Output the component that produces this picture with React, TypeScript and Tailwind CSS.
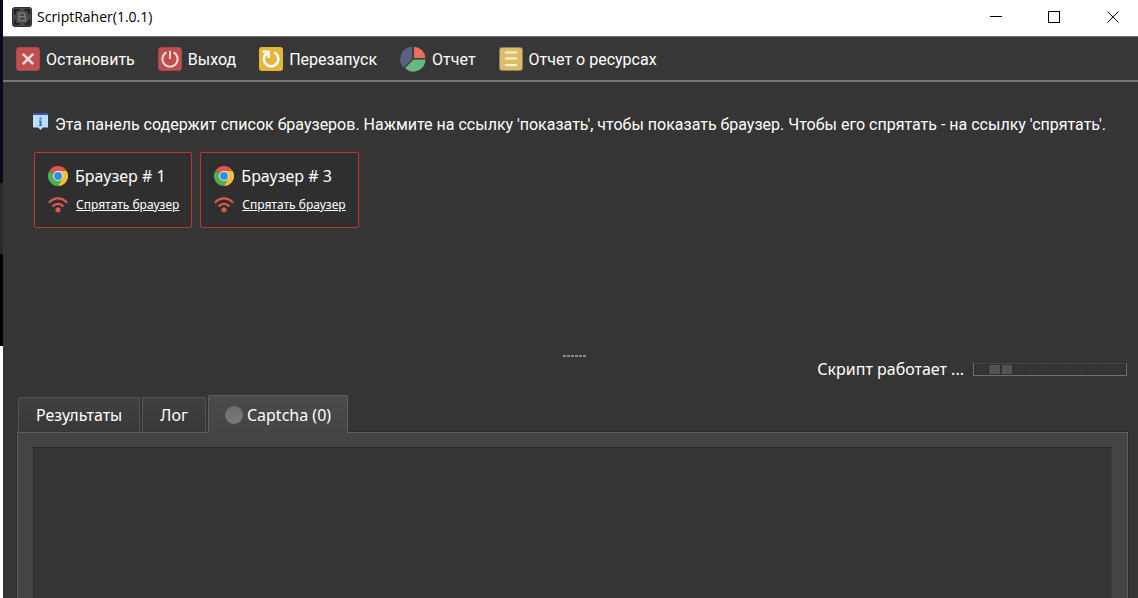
import { useState } from "react";
import type { ReactNode } from "react";
import { clsx } from "clsx";

const BROWSERS = [1, 3];

const PROGRESS_CELLS = ["idle", "on", "on", "idle", "idle", "idle", "idle", "idle", "idle", "idle", "idle", "idle"];

function AppLogo() {
  return (
    <svg width="20" height="20" viewBox="0 0 20 20" fill="none">
      <rect x="0.5" y="0.5" width="19" height="19" rx="2" fill="#484848" stroke="#303030" />
      <path
        d="M3 7.5V3h4.5M12.5 3H17v4.5M17 12.5V17h-4.5M7.5 17H3v-4.5"
        stroke="#161616"
        strokeWidth="1.5"
      />
      <path d="M7 6h4.2a1.9 1.9 0 0 1 0 3.8H7zM7 9.8h4.8a2 2 0 0 1 0 4H7z" stroke="#8c8c8c" strokeWidth="1.1" />
    </svg>
  );
}

function StopIcon() {
  return (
    <svg width="24" height="24" viewBox="0 0 24 24">
      <rect x="0.5" y="0.5" width="23" height="23" rx="2.5" fill="#bf4f51" stroke="#a84648" />
      <path d="M6.8 6.8l10.4 10.4M17.2 6.8L6.8 17.2" stroke="#f1dcdc" strokeWidth="2.6" />
    </svg>
  );
}

function PowerIcon() {
  return (
    <svg width="24" height="24" viewBox="0 0 24 24" fill="none">
      <rect x="0.5" y="0.5" width="23" height="23" rx="2.5" fill="#bf4f51" stroke="#a84648" />
      <path d="M8.5 5.3a7.6 7.6 0 1 0 7 0" stroke="#f1dcdc" strokeWidth="1.9" />
      <path d="M12 4v8" stroke="#f1dcdc" strokeWidth="1.9" />
    </svg>
  );
}

function RestartIcon() {
  return (
    <svg width="24" height="24" viewBox="0 0 24 24" fill="none">
      <rect width="24" height="24" rx="3" fill="#e5b53c" />
      <path d="M15.2 5.4A7.3 7.3 0 1 1 6.8 7" stroke="#fff" strokeWidth="2.6" />
      <path d="M3.5 4.6H9.7V11" stroke="#fff" strokeWidth="2.4" />
      <path d="M9.5 5L6.2 8.6" stroke="#fff" strokeWidth="2.2" />
    </svg>
  );
}

function PieIcon() {
  return (
    <svg width="26" height="26" viewBox="0 0 26 26">
      <path d="M12.3 13L3.6 21.5A12.3 12.3 0 0 1 12.3 0.8z" fill="#5b6180" />
      <path d="M14 0.8A12 12 0 0 1 25.5 12H14z" fill="#ec6e5b" />
      <path d="M13.5 13.4H25.5A12 12 0 0 1 5 22z" fill="#64b97e" />
    </svg>
  );
}

function ListIcon() {
  return (
    <svg width="24" height="24" viewBox="0 0 24 24">
      <rect x="0.5" y="0.5" width="23" height="23" rx="2.5" fill="#dfbc66" stroke="#8a7f68" />
      <path d="M6 5.5h12M6 11.5h12M6 18h12" stroke="#fbf3df" strokeWidth="2.2" />
    </svg>
  );
}

function InfoIcon() {
  return (
    <svg width="15" height="17" viewBox="0 0 15 17" className="shrink-0">
      <path d="M0 2h15v12.5H9.8L7.5 17 5.2 14.5H0z" fill="#bbdefb" />
      <path d="M0 0h15v2H0z" fill="#3f51b5" />
      <path d="M6.5 4.5h2v2h-2zM6 7.5h2.5V12H9v1H6v-1h.5V8.5H6z" fill="#1976d2" />
    </svg>
  );
}

function ChromeIcon() {
  return (
    <svg width="20" height="20" viewBox="0 0 48 48">
      <path d="M24 24L3.2 12A24 24 0 0 1 44.8 12H24z" fill="#e0564b" />
      <path d="M24 24L3.2 12A24 24 0 0 0 24 48L34.4 30z" fill="#4caf50" />
      <path d="M24 48A24 24 0 0 0 44.8 12H24L34.4 30z" fill="#f5c02f" />
      <circle cx="24" cy="24" r="12" fill="#f2f2f2" />
      <circle cx="24" cy="24" r="9.6" fill="#2f8fe8" />
    </svg>
  );
}

function WifiIcon() {
  return (
    <svg width="20" height="16" viewBox="0 0 20 16" fill="none" stroke="#dd5a4f" strokeWidth="2.3">
      <path d="M0.9 5.8C6 0 14 0 19.1 5.8" />
      <path d="M4.6 9.4C7.6 5.9 12.4 5.9 15.4 9.4" />
      <circle cx="10" cy="12.8" r="2.6" fill="#dd5a4f" stroke="none" />
    </svg>
  );
}

function TitleBar() {
  return (
    <header className="flex h-9 items-center bg-white pb-0.5 pl-[9px] font-['Open_Sans',sans-serif] text-black">
      <AppLogo />
      <h1 className="ml-[5px] flex-1 text-sm">ScriptRaher(1.0.1)</h1>
      <div className="flex">
        <button type="button" aria-label="Свернуть" className="flex h-8 w-[58px] items-center justify-center">
          <svg width="12" height="12" stroke="#000" shapeRendering="crispEdges">
            <path d="M0 5.5h12" />
          </svg>
        </button>
        <button type="button" aria-label="Развернуть" className="flex h-8 w-[58px] items-center justify-center">
          <svg width="12" height="12" fill="none" stroke="#000" shapeRendering="crispEdges">
            <rect x="0.5" y="0.5" width="11" height="11" />
          </svg>
        </button>
        <button type="button" aria-label="Закрыть" className="flex h-8 w-[55px] items-center justify-center pl-1">
          <svg width="12" height="12" stroke="#000">
            <path d="M0.5 0.5l11 11M11.5 0.5l-11 11" />
          </svg>
        </button>
      </div>
    </header>
  );
}

interface ToolButtonProps {
  icon: ReactNode;
  label: string;
}

function ToolButton({ icon, label }: ToolButtonProps) {
  return (
    <button type="button" className="flex items-center gap-1.5 whitespace-nowrap">
      {icon}
      <span className="pt-0.5">{label}</span>
    </button>
  );
}

function BrowserCard({ id }: { id: number }) {
  return (
    <li className="flex flex-col gap-1 rounded-xs border border-[#b83a36] bg-[#2f2f2f] px-3 py-[11px] shadow-[0_0_2px_#6b2a28]">
      <div className="flex h-6 items-center gap-[7px] pl-px">
        <ChromeIcon />
        <span>Браузер # {id}</span>
      </div>
      <div className="flex h-6 items-center gap-2 pt-0.5 pl-px">
        <WifiIcon />
        <a href="#" className="whitespace-nowrap text-xs underline">
          Спрятать браузер
        </a>
      </div>
    </li>
  );
}

interface TabProps {
  active: boolean;
  onClick: () => void;
  children: ReactNode;
}

function Tab({ active, onClick, children }: TabProps) {
  return (
    <button
      type="button"
      role="tab"
      aria-selected={active}
      onClick={onClick}
      className={clsx(
        "flex items-center justify-center rounded-t-xs border border-b-0",
        active
          ? "-mb-px h-[38px] gap-1 border-[#606060] bg-linear-to-b from-[#4b4b4b] to-[#444444] px-4"
          : "mr-0.5 h-[35px] border-[#555555] bg-linear-to-b from-[#414141] to-[#383838] px-[17px]"
      )}
    >
      {children}
    </button>
  );
}

export default function App() {
  const [tab, setTab] = useState("captcha");

  return (
    <div className="flex min-h-screen font-['Noto_Sans',sans-serif] text-base leading-6 text-white">
      {/* desktop showing past the window edge */}
      <div className="flex w-[3px] shrink-0 flex-col">
        <div className="grow-[183] bg-[#0a081c]" />
        <div className="grow-[71] bg-[#2a2a2a]" />
        <div className="grow-[92] bg-black" />
        <div className="grow-[252] bg-white" />
      </div>

      <div className="flex min-w-0 flex-1 flex-col bg-[#353535]">
        <TitleBar />

        <nav className="flex h-[46px] items-center gap-[23px] border-t border-b-2 border-t-[#777777] border-b-[#777777] bg-[#373737] pl-[13px] font-[Roboto,sans-serif]">
          <ToolButton icon={<StopIcon />} label="Остановить" />
          <ToolButton icon={<PowerIcon />} label="Выход" />
          <ToolButton icon={<RestartIcon />} label="Перезапуск" />
          <ToolButton icon={<PieIcon />} label="Отчет" />
          <ToolButton icon={<ListIcon />} label="Отчет о ресурсах" />
        </nav>

        <section className="min-h-[272px] px-[30px] pt-[31px]">
          <p className="flex gap-[7px] font-[Roboto,sans-serif] whitespace-nowrap">
            <InfoIcon />
            Эта панель содержит список браузеров. Нажмите на ссылку 'показать', чтобы показать браузер. Чтобы его
            спрятать - на ссылку 'спрятать'.
          </p>
          <ul className="mt-[15px] flex gap-2 pl-px">
            {BROWSERS.map((id) => (
              <BrowserCard key={id} id={id} />
            ))}
          </ul>
        </section>

        <div className="flex h-[3px] items-center justify-center gap-px pl-2">
          {[0, 1, 2, 3, 4, 5].map((dot) => (
            <span key={dot} className="h-0.5 w-[3px] bg-[#8a8a8a]" />
          ))}
        </div>

        <div className="flex items-center justify-end gap-[9px] pr-[11px]">
          <span id="status">Скрипт работает ...</span>
          <div
            role="progressbar"
            aria-labelledby="status"
            className="flex h-[13px] w-[154px] gap-0.5 border border-t-[#484848] border-r-[#707070] border-b-[#707070] border-l-[#707070] bg-[#303030] px-[3px] py-px"
          >
            {PROGRESS_CELLS.map((cell, i) => (
              <span key={i} className={clsx("flex-1", cell === "on" ? "bg-[#535353]" : "bg-[#353535]")} />
            ))}
          </div>
        </div>

        <div className="mt-[14px] flex flex-1 flex-col pr-[10px] pl-[14px]">
          <div role="tablist" className="relative flex items-end pl-px">
            <Tab active={tab === "results"} onClick={() => setTab("results")}>
              Результаты
            </Tab>
            <Tab active={tab === "log"} onClick={() => setTab("log")}>
              Лог
            </Tab>
            <Tab active={tab === "captcha"} onClick={() => setTab("captcha")}>
              <span className="size-[18px] rounded-full bg-linear-to-b from-[#6c6c6c] to-[#7c7c7c]" />
              Captcha (0)
            </Tab>
          </div>
          <div
            role="tabpanel"
            className="flex flex-1 flex-col border border-b-0 border-[#606060] bg-[#444444] px-[15px] pt-[14px] shadow-[0_0_0_1px_#2a2a2a]"
          >
            <div className="flex-1 border border-b-0 border-t-[#282828] border-r-[#3e3e3e] border-l-[#2e2e2e] bg-[#353535]" />
          </div>
        </div>
      </div>
    </div>
  );
}
